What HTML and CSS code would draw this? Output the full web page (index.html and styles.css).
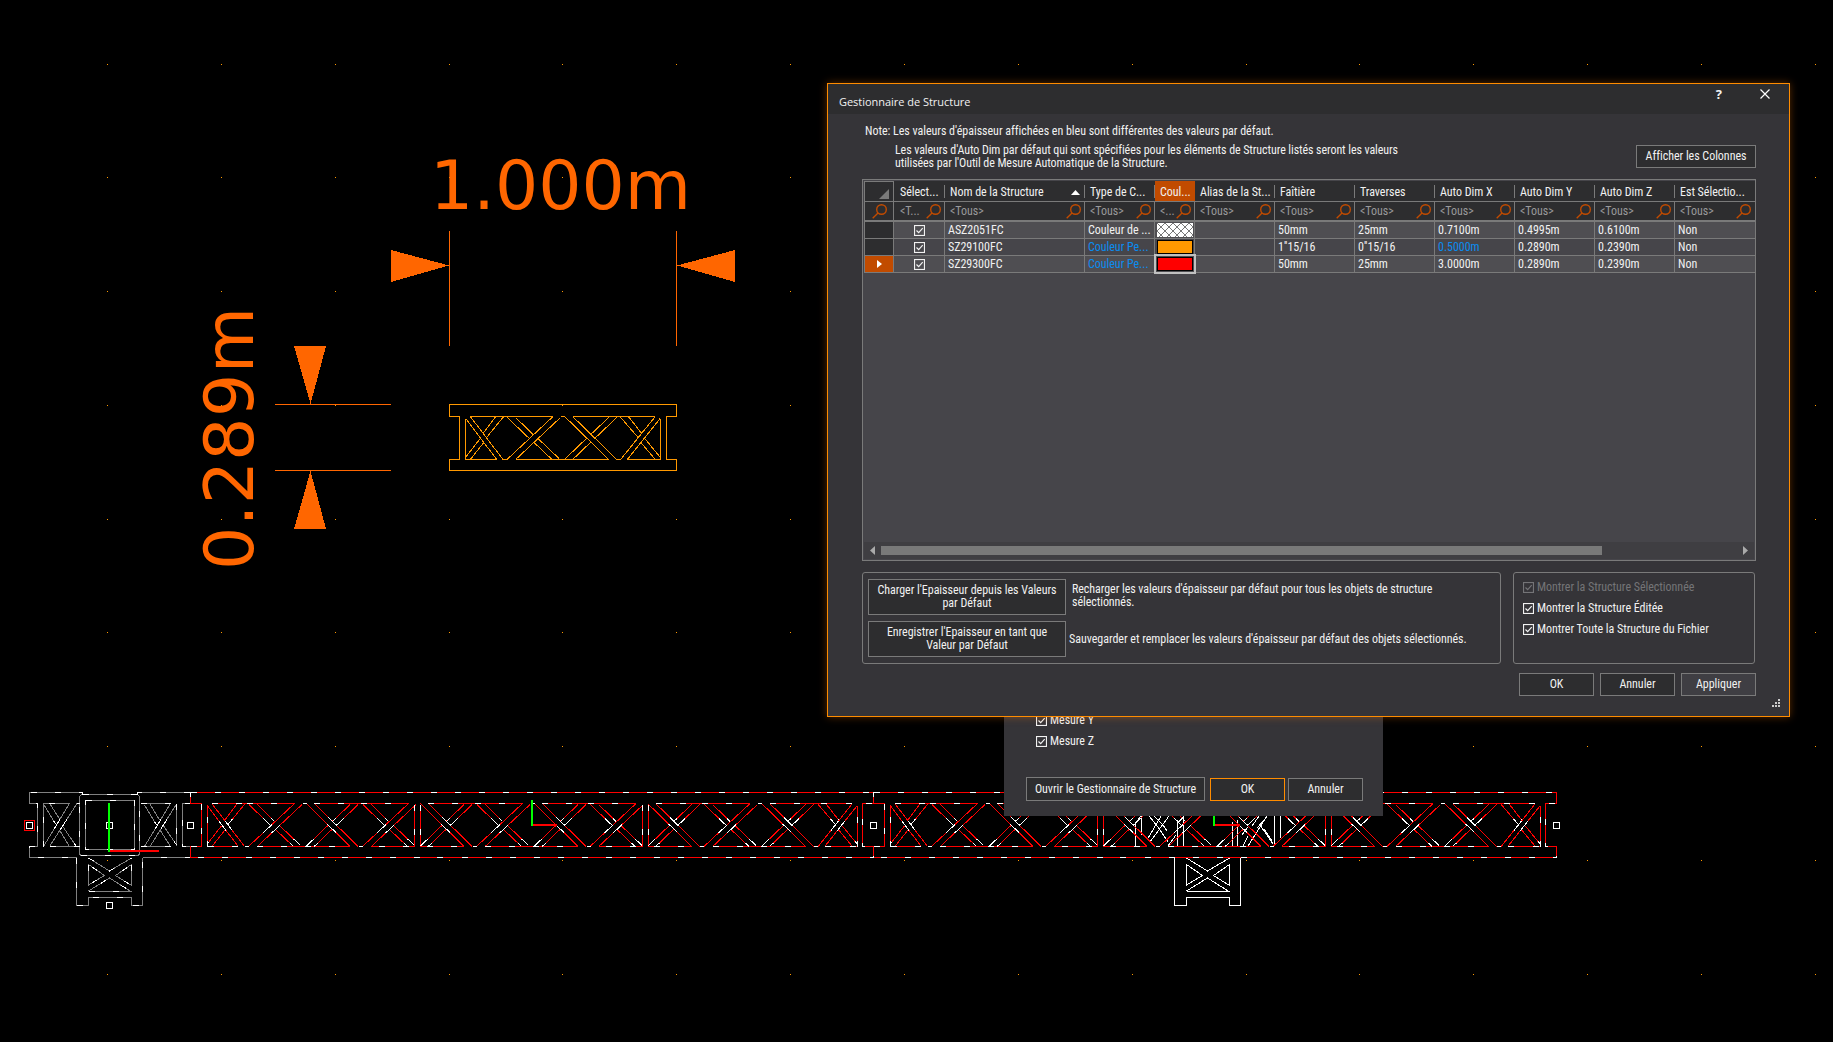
FILE: index.html
```html
<!DOCTYPE html>
<html lang="fr">
<head>
<meta charset="utf-8">
<title>Gestionnaire de Structure</title>
<link rel="stylesheet" href="styles.css">
</head>
<body>
<svg class="drawing" width="1833" height="1042" viewBox="0 0 1833 1042">
  <defs>
    <path id="end" d="M-39.3 43V2M-8.3 43H-39.3M-34.7 0H0M-2 43H2"/>
    <path id="end-ties" class="ties" d="M-8.3 43L-39.3 2M-2 43L-34.7 0M-9.3 0L-21.7 16.7M-1.3 0L-18.7 21.3M-25 22.3L-39.3 40.7M-21.7 26.7L-34.7 43"/>
    <path id="diagonals" class="ties" d="M2 43L48 0M2.3 1L24 21.7M10.7 1L28 18M28.7 25.7L47 43M103.7 43L59.7 0M103.7 1L85.7 18M111.7 1L90 21.7M85.7 25.7L67.7 43M67.7 0L111.7 43M10.7 43L55.5 1M32.7 21.7L54 42M81.7 21.7L60 42.5"/>
    <path id="open" d="M0 0H48M67.7 0H114M56 0H60M10.7 43H103.7M112 43H116"/>
    <path id="split" d="M0 0H48M67.7 0H114M54 1V43H10.7M60 1V43H103.7M112 43H116"/>
    <g id="truss3">
      <path d="M190.500 792.500H873.500V803.500H862.500V846.500H873.500V857.500H190.500V846.500H201.500V803.500H190.500Z"/>
      <g transform="translate(0 803.5)">
        <use href="#end" x="246.500"/><use href="#end-ties" x="246.500"/>
        <use href="#diagonals" x="246.500"/><use href="#open" x="246.500"/>
        <use href="#diagonals" x="360.500"/><use href="#split" x="360.500"/>
        <use href="#diagonals" x="474.500"/><use href="#open" x="474.500"/>
        <use href="#diagonals" x="588"/><use href="#split" x="588"/>
        <use href="#diagonals" x="702"/><use href="#open" x="702"/>
        <g transform="translate(816 0) scale(-1.05 1)"><use href="#end"/><use href="#end-ties"/></g>
      </g>
    </g>
    <path id="leg" d="M76.500 857.500V905.500H88.500V897.500H131.500V905.500H142.500V857.500M88.500 891.500H131L109.500 878L88.500 891M88.500 858L109.500 871L131.500 858M88.500 864.500V885L104.500 875.500ZM131.500 864.500V885.500L115.500 875.500Z"/>
    <g id="corner">
      <path d="M82.500 794.500V792.500H29.500V803.500H37.500V846.500H29.500V857.500H76.500M137.500 794.500V792.500H190.500M190.500 803.500H182.500V846.500H190.500M190.500 857.500H142.500"/>
      <rect x="79.500" y="794.500" width="60" height="61" rx="3"/>
      <rect x="85.500" y="800.500" width="49" height="49"/>
      <path d="M43.500 846.500V803.500H69.500M49.500 846.500H79.500M77 803.500H79.500M140.500 803.500H170.500M140.500 846.500H170.500M176.500 804V846"/>
      <path class="ties" d="M43.500 846.500L69.500 803.500M49.500 846.500L77 803.500M43.500 804L55.500 824M50 804L59.500 819M59.500 830L69 846M62.500 826L76 846M144.500 846.500L170.500 803.500M150 846.500L176.500 804M144.500 805L156.500 825M149.500 803.500L159.500 820M160 830L170.500 846.500M163 825L176.500 845"/>
      <use href="#leg"/>
    </g>
    <rect id="grip" x="-3" y="-3" width="6" height="6"/>
  </defs>

  <path class="dots" d="M107 64.500H1833M107 177.500H1833M107 291.500H1833M107 405.500H1833M107 519.500H1833M107 632.500H1833M107 746.500H1833M107 860.500H1833M107 974.500H1833"/>

  <g class="dimension">
    <path class="dimension-line" d="M449.500 231V346M676.500 231V346M275 404.500H391M275 470.500H391"/>
    <path d="M391 250V282L449 265.500ZM735 250V282L677 265.500ZM294 346H326L310.500 404ZM294 529H326L310.500 471Z"/>
    <text x="430" y="209">1.000m</text>
    <text class="vertical" transform="translate(253 570) rotate(-90)">0.289m</text>
  </g>

  <g class="amber">
    <path d="M449.500 404.500H676.500V416.500H666.500V459.500H676.500V470.500H449.500V459.500H459.500V416.500H449.500Z"/>
    <g transform="translate(505 416.5)">
      <use href="#end"/><use href="#end-ties"/><use href="#diagonals"/><use href="#open"/>
      <g transform="translate(113.500 0) scale(-1.06 1)"><use href="#end"/><use href="#end-ties"/></g>
    </g>
  </g>

  <g class="gray"><use href="#corner"/></g>
  <g class="dash"><use href="#corner"/></g>
  <g class="white">
    <use href="#leg" x="1098"/>
    <path d="M1135.500 822V846M1141.500 816V835M1177.500 820V846M1183.500 816V846M1232.500 822V846M1237.500 820V846M1274.500 816V844M1280.500 816V838M1135 824L1141 816M1149 816L1158 827M1154 816L1162 824M1169 816L1150 842M1161 816L1147 840M1158 827L1168 842M1163 825L1167 831M1177 824L1184 816M1168 846L1176 835M1243 846L1248 836M1248 846L1267 816M1252 826L1259 816M1257 828L1265 819M1260 825L1273 844M1242 835L1248 827M1264 829L1272 841"/>
  </g>
  <g class="red"><use href="#truss3"/><use href="#truss3" x="683"/></g>
  <g class="dash"><use href="#truss3"/><use href="#truss3" x="683"/></g>

  <g class="white">
    <use href="#grip" x="29.500" y="825.500"/><use href="#grip" x="109.500" y="825.500"/><use href="#grip" x="190.500" y="825.500"/>
    <use href="#grip" x="109.500" y="905.500"/><use href="#grip" x="873.500" y="825.500"/><use href="#grip" x="1556.500" y="825.500"/>
  </g>
  <rect class="red" x="24.500" y="820.500" width="10" height="10"/>
  <path class="axis-x" d="M109 851H159M532 825H557M1214 825H1240"/>
  <path class="axis-y" d="M109 803V852M532 800V826M1214 800V826"/>
</svg>

<svg class="defs" width="0" height="0">
  <symbol id="check" viewBox="0 0 11 11"><rect x=".5" y=".5" width="10" height="10"/><path d="M2.500 5.500L4.700 7.700L8.700 3.200"/></symbol>
  <symbol id="lens" viewBox="0 0 15 15"><circle cx="9.500" cy="5.500" r="4.800"/><path d="M6 9L.7 14.300"/></symbol>
</svg>

<section class="window measure">
  <label class="option"><svg class="check"><use href="#check"/></svg>Mesure Y</label>
  <label class="option"><svg class="check"><use href="#check"/></svg>Mesure Z</label>
  <div class="measure-actions">
    <button class="button open-manager">Ouvrir le Gestionnaire de Structure</button>
    <button class="button focused">OK</button>
    <button class="button">Annuler</button>
  </div>
</section>

<section class="window manager">
  <header class="titlebar">
    <h1>Gestionnaire de Structure</h1>
    <span class="help">?</span>
    <svg class="close" width="10" height="10"><path d="M.5 .5L9.500 9.500M9.500 .5L.5 9.500"/></svg>
  </header>
  <div class="content">
    <div class="notes">
      <div>
        <p>Note: Les valeurs d'épaisseur affichées en bleu sont différentes des valeurs par défaut.</p>
        <p class="indented">Les valeurs d'Auto Dim par défaut qui sont spécifiées pour les éléments de Structure listés seront les valeurs<br>utilisées par l'Outil de Mesure Automatique de la Structure.</p>
      </div>
      <button class="button columns">Afficher les Colonnes</button>
    </div>

    <div class="table">
      <div class="row head">
        <span class="mark"><svg width="10" height="10"><path d="M10 0V10H0Z" fill="#7a7a7a"/></svg></span>
        <span>Sélect...</span><span class="sorted">Nom de la Structure<svg width="9" height="5"><path d="M4.500 0L9 5H0Z" fill="#fff"/></svg></span><span>Type de C...</span><span class="active">Coul...</span><span>Alias de la St...</span><span>Faîtière</span><span>Traverses</span><span>Auto Dim X</span><span>Auto Dim Y</span><span>Auto Dim Z</span><span>Est Sélectio...</span>
      </div>
      <div class="row filter">
        <span class="mark"><svg class="lens"><use href="#lens"/></svg></span>
        <span>&lt;T...<svg class="lens"><use href="#lens"/></svg></span>
        <span>&lt;Tous&gt;<svg class="lens"><use href="#lens"/></svg></span>
        <span>&lt;Tous&gt;<svg class="lens"><use href="#lens"/></svg></span>
        <span>&lt;...<svg class="lens"><use href="#lens"/></svg></span>
        <span>&lt;Tous&gt;<svg class="lens"><use href="#lens"/></svg></span>
        <span>&lt;Tous&gt;<svg class="lens"><use href="#lens"/></svg></span>
        <span>&lt;Tous&gt;<svg class="lens"><use href="#lens"/></svg></span>
        <span>&lt;Tous&gt;<svg class="lens"><use href="#lens"/></svg></span>
        <span>&lt;Tous&gt;<svg class="lens"><use href="#lens"/></svg></span>
        <span>&lt;Tous&gt;<svg class="lens"><use href="#lens"/></svg></span>
        <span>&lt;Tous&gt;<svg class="lens"><use href="#lens"/></svg></span>
      </div>
      <div class="row data">
        <span class="mark"></span><span class="tick"><svg class="check"><use href="#check"/></svg></span><span>ASZ2051FC</span><span>Couleur de ...</span>
        <span class="color"><svg class="hatch" width="36" height="14"><defs><pattern id="cross" width="8" height="8" patternUnits="userSpaceOnUse"><path d="M0 0L8 8M8 0L0 8" stroke="#777" stroke-width="1"/></pattern></defs><rect width="36" height="14" fill="#fff"/><rect width="36" height="14" fill="url(#cross)"/></svg></span>
        <span></span><span>50mm</span><span>25mm</span><span>0.7100m</span><span>0.4995m</span><span>0.6100m</span><span>Non</span>
      </div>
      <div class="row data alt">
        <span class="mark"></span><span class="tick"><svg class="check"><use href="#check"/></svg></span><span>SZ29100FC</span><span class="changed">Couleur Pe...</span>
        <span class="color"><i class="swatch orange"></i></span>
        <span></span><span>1''15/16</span><span>0''15/16</span><span class="changed">0.5000m</span><span>0.2890m</span><span>0.2390m</span><span>Non</span>
      </div>
      <div class="row data">
        <span class="mark current"><svg width="5" height="8"><path d="M0 0L5 4L0 8Z" fill="#fff"/></svg></span><span class="tick"><svg class="check"><use href="#check"/></svg></span><span>SZ29300FC</span><span class="changed">Couleur Pe...</span>
        <span class="color"><i class="swatch crimson"></i></span>
        <span></span><span>50mm</span><span>25mm</span><span>3.0000m</span><span>0.2890m</span><span>0.2390m</span><span>Non</span>
      </div>
      <div class="scrollbar">
        <svg width="5" height="9"><path d="M5 0V9L0 4.500Z" fill="#aaa"/></svg>
        <div class="track"><div class="thumb"></div></div>
        <svg width="5" height="9"><path d="M0 0V9L5 4.500Z" fill="#aaa"/></svg>
      </div>
    </div>

    <div class="groups">
      <div class="group defaults">
        <button class="button tall">Charger l'Epaisseur depuis les Valeurs<br>par Défaut</button>
        <p class="first">Recharger les valeurs d'épaisseur par défaut pour tous les objets de structure<br>sélectionnés.</p>
        <button class="button tall">Enregistrer l'Epaisseur en tant que<br>Valeur par Défaut</button>
        <p>Sauvegarder et remplacer les valeurs d'épaisseur par défaut des objets sélectionnés.</p>
      </div>
      <div class="group display">
        <label class="option disabled"><svg class="check"><use href="#check"/></svg>Montrer la Structure Sélectionnée</label>
        <label class="option"><svg class="check"><use href="#check"/></svg>Montrer la Structure Éditée</label>
        <label class="option"><svg class="check"><use href="#check"/></svg>Montrer Toute la Structure du Fichier</label>
      </div>
    </div>

    <div class="actions">
      <button class="button">OK</button>
      <button class="button">Annuler</button>
      <button class="button apply">Appliquer</button>
    </div>
  </div>
  <svg class="resize" width="8" height="8"><path d="M6 0h2v2h-2zM3 3h2v2h-2zM6 3h2v2h-2zM0 6h2v2h-2zM3 6h2v2h-2zM6 6h2v2h-2z" fill="#ccc"/></svg>
</section>
</body>
</html>
```
FILE: styles.css
```css
* { box-sizing: border-box; }
body {
  margin: 0;
  width: 1833px;
  height: 1042px;
  position: relative;
  overflow: hidden;
  background: #000;
  color: #f1f1f1;
  font: 12px/13px "Roboto Condensed", Roboto, "Liberation Sans", sans-serif;
  letter-spacing: -.03px;
}
p, h1 { margin: 0; }
svg { display: block; flex: none; }
.defs { position: absolute; }

/* drawing */
.drawing { fill: none; shape-rendering: crispEdges; letter-spacing: 0; }
.dots { stroke: #f90; stroke-dasharray: 1 112.85; }
.dimension { fill: #f60; }
.dimension-line { stroke: #f60; }
.dimension text { font: 68px "DejaVu Sans", sans-serif; }
.dimension .vertical { letter-spacing: .4px; }
.amber { stroke: #f90; }
.gray { stroke: #808080; }
.white { stroke: #fff; }
.red { stroke: #f00; }
.dash { stroke: #fff; stroke-dasharray: 6 18; --tie-dash: 0 20 12 38; }
.ties { stroke-dasharray: var(--tie-dash, none); }
.axis-x { stroke: #f00; stroke-width: 2; }
.axis-y { stroke: #0f0; stroke-width: 2; }

/* shared controls */
.window { position: absolute; background: #353438; }
.button {
  width: 75px;
  height: 23px;
  padding: 0;
  border: 1px solid #7a7a7a;
  background: #2d2d2f;
  color: inherit;
  font: inherit;
  letter-spacing: inherit;
  white-space: nowrap;
}
.focused { border-color: #ff8c00; }
.option { display: flex; align-items: center; gap: 3px; height: 11px; margin-bottom: 10px; white-space: nowrap; }
.check { width: 11px; height: 11px; fill: none; stroke: #f1f1f1; stroke-width: 1.2; }
.disabled { color: #747477; }
.disabled .check { stroke: #747477; }

/* measure window */
.measure { left: 1004px; top: 600px; width: 379px; height: 216px; padding: 115px 20px 15px 22px; display: flex; flex-direction: column; }
.measure .option { margin-left: 10px; }
.measure-actions { margin-top: auto; display: flex; align-items: flex-end; gap: 3px; }
.open-manager { width: 179px; height: 24px; margin-right: 2px; }

/* manager window */
.manager {
  left: 827px;
  top: 83px;
  width: 963px;
  height: 634px;
  border: 1px solid #ff8c00;
  box-shadow: 0 0 8px rgba(255, 120, 0, .35);
}
.titlebar { display: flex; height: 30px; padding: 0 19px 0 11px; background: #2d2d2f; }
.titlebar h1 { flex: 1; padding-top: 11px; font: 11px/13px "Open Sans", sans-serif; }
.help { font: bold 13px/21px "Open Sans", sans-serif; margin-right: 38px; }
.close { margin-top: 5px; stroke: #fff; stroke-width: 1.2; }
.content { padding: 11px 33px 0 34px; }
.notes { display: flex; justify-content: space-between; height: 54px; padding-left: 3px; }
.indented { margin: 6px 0 0 30px; letter-spacing: -.09px; }
.columns { width: 120px; margin-top: 20px; }

.table { height: 382px; padding: 1px; border: 1px solid #7a7a7a; background: #46454a; display: flex; flex-direction: column; }
.row { display: grid; grid-template-columns: 31px 50px 140px 70px 40px repeat(7, 80px); border-bottom: 1px solid #7a7a7a; width: 891px; }
.row > span { display: flex; align-items: center; padding-left: 5px; border-right: 1px solid #7a7a7a; white-space: nowrap; overflow: hidden; }
.row > span:last-child { border-right-color: transparent; }
.row > .mark { justify-content: center; padding: 0; border-left: 1px solid #7a7a7a; margin-right: 1px; background: #2d2d2f; }
.head { height: 21px; background: #2d2d2f; }
.head > span { padding-top: 2px; border-right: 0; background: linear-gradient(#7a7a7a, #7a7a7a) 100% 55% / 1px 13px no-repeat; }
.head > span:last-child { background: none; }
.head > .mark { justify-content: flex-end; padding: 4px 4px 0 0; border-right: 1px solid #7a7a7a; border-top: 1px solid #7a7a7a; }
.head > .sorted { justify-content: space-between; padding-right: 5px; }
.head > .active { background: #c14b00; }
.filter { height: 20px; background: #2d2d2f; color: #99999b; border-bottom-width: 2px; }
.lens { width: 15px; height: 15px; margin: 0 3px 0 auto; fill: none; stroke: #c14b00; stroke-width: 1.4; }
.mark .lens { margin: 0; }
.data { height: 17px; background: #4f4e52; line-height: 16px; }
.data > span { padding-left: 3px; }
.data.alt { background: #46454a; }
.data > .tick { justify-content: center; padding: 0; }
.data > .changed { color: #0a8cf0; }
.data > .color { padding: 0 0 0 2px; overflow: visible; }
.data > .current { background: #c14b00; }
.swatch { width: 36px; height: 14px; border: 1px solid #000; }
.orange { background: #f90; }
.crimson { background: #f00; outline: 2px solid #c0c0c0; outline-offset: 1px; z-index: 1; }
.scrollbar { display: flex; align-items: center; gap: 6px; height: 17px; margin-top: auto; padding: 0 6px; background: #3f3e42; }
.track { flex: 1; }
.thumb { width: 721px; height: 9px; background: #797979; }

.groups { display: flex; gap: 12px; margin: 11px 1px 9px 0; }
.group { height: 92px; border: 1px solid #7a7a7a; border-radius: 3px; }
.defaults { flex: 1; display: grid; grid-template-columns: 198px 1fr; grid-template-rows: 36px 36px; gap: 6px 3px; padding: 6px 5px; align-items: center; white-space: nowrap; }
.defaults .first { padding: 0 0 2px 3px; letter-spacing: -.06px; }
.tall { width: 198px; height: 36px; }
.display { width: 242px; padding: 9px; }
.actions { display: flex; justify-content: flex-end; gap: 6px; }
.apply { background: #3f3e43; }
.resize { position: absolute; right: 9px; bottom: 9px; }
```
